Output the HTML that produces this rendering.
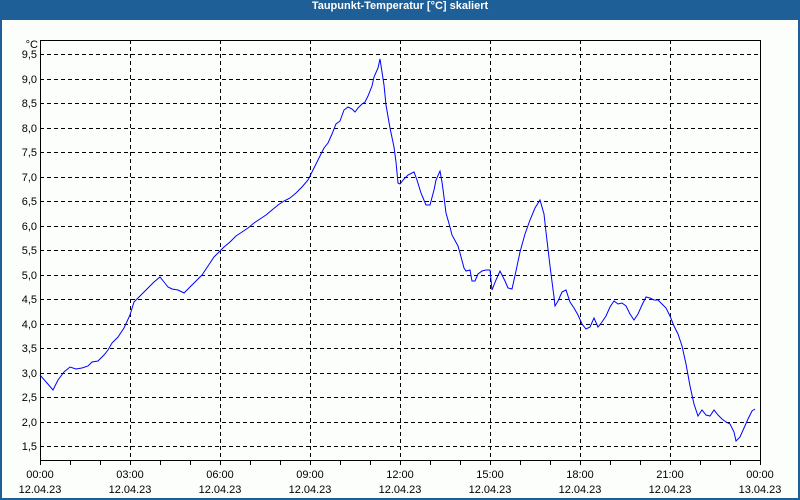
<!DOCTYPE html>
<html><head><meta charset="utf-8"><style>
html,body{margin:0;padding:0;width:800px;height:500px;overflow:hidden;background:#1d5f96}
#w{position:absolute;left:2px;top:20px;width:796px;height:478px;background:#fcfefc}
#t{position:absolute;left:0;top:0;width:800px;height:20px;line-height:18px;text-align:center;color:#fff;font:bold 11px "Liberation Sans",sans-serif}
svg{position:absolute;left:0;top:0}
text{font-family:"Liberation Sans",sans-serif;font-size:11px;fill:#000}
</style></head><body>
<div id="t">Taupunkt-Temperatur [°C] skaliert</div>
<div id="w"></div>
<svg width="800" height="500" viewBox="0 0 800 500">
<g stroke="#000" stroke-width="1" stroke-dasharray="4,3" shape-rendering="crispEdges">
<line x1="40" y1="54.5" x2="760" y2="54.5"/><line x1="40" y1="79.5" x2="760" y2="79.5"/><line x1="40" y1="103.5" x2="760" y2="103.5"/><line x1="40" y1="128.5" x2="760" y2="128.5"/><line x1="40" y1="152.5" x2="760" y2="152.5"/><line x1="40" y1="177.5" x2="760" y2="177.5"/><line x1="40" y1="201.5" x2="760" y2="201.5"/><line x1="40" y1="226.5" x2="760" y2="226.5"/><line x1="40" y1="250.5" x2="760" y2="250.5"/><line x1="40" y1="275.5" x2="760" y2="275.5"/><line x1="40" y1="299.5" x2="760" y2="299.5"/><line x1="40" y1="324.5" x2="760" y2="324.5"/><line x1="40" y1="348.5" x2="760" y2="348.5"/><line x1="40" y1="373.5" x2="760" y2="373.5"/><line x1="40" y1="397.5" x2="760" y2="397.5"/><line x1="40" y1="422.5" x2="760" y2="422.5"/><line x1="40" y1="446.5" x2="760" y2="446.5"/>
<line x1="130.5" y1="40" x2="130.5" y2="460"/><line x1="220.5" y1="40" x2="220.5" y2="460"/><line x1="310.5" y1="40" x2="310.5" y2="460"/><line x1="400.5" y1="40" x2="400.5" y2="460"/><line x1="490.5" y1="40" x2="490.5" y2="460"/><line x1="580.5" y1="40" x2="580.5" y2="460"/><line x1="670.5" y1="40" x2="670.5" y2="460"/>
</g>
<g stroke="#000" stroke-width="1" shape-rendering="crispEdges" fill="none">
<rect x="40.5" y="40.5" width="720" height="420"/>
<path d="M70.5 460v5M100.5 460v5M130.5 460v5M160.5 460v5M190.5 460v5M220.5 460v5M250.5 460v5M280.5 460v5M310.5 460v5M340.5 460v5M370.5 460v5M400.5 460v5M430.5 460v5M460.5 460v5M490.5 460v5M520.5 460v5M550.5 460v5M580.5 460v5M610.5 460v5M640.5 460v5M670.5 460v5M700.5 460v5M730.5 460v5M760.5 460v5M40.5 460v5"/>
</g>
<polyline fill="none" stroke="#0000ff" stroke-width="1" points="40,375 47,383 53,390 58,380 64,372 70,367 76,369 82,368 88,366 92,362 98,361 104,355 108,350 112,343 118,337 124,328 130,315 134,302 138,298 144,292 148,288 154,282 160,277 164,282 168,287 172,289 178,290 184,293 190,287 196,281 202,275 208,266 214,257 218,253 224,247 230,242 236,236 242,232 248,228 254,223 260,219 266,215 272,210 278,205 284,201 290,198 296,193 302,187 308,180 312,172 318,160 324,148 328,143 332,134 336,124 340,121 344,110 348,107 352,109 355,112 358,108 362,104 365,102 368,96 372,86 374,77 378,68 380,59 384,85 386,105 390,128 394,147 396,162 398,183 400,184 404,179 408,175 414,172 417,180 421,193 426,205 430,205 434,190 436,180 440,171 442,182 444,197 446,213 450,227 452,235 458,246 460,253 464,268 466,271 470,270 472,281 475,281 478,274 482,271 486,270 490,270 492,290 496,280 500,271 505,281 508,288 512,289 516,271 520,252 525,234 530,220 535,208 540,200 544,214 546,232 550,266 554,297 555,306 558,301 562,292 566,290 570,302 574,308 578,315 582,324 586,329 590,327 594,318 598,327 602,322 606,316 610,307 614,301 618,304 622,303 626,306 630,314 634,320 638,314 642,305 646,297 650,298 654,300 658,300 662,304 666,308 670,316 674,326 678,334 682,346 686,364 690,386 694,404 698,416 702,410 706,415 710,416 714,410 718,415 722,419 726,422 730,424 734,432 736,441 740,437 744,428 748,419 752,411 755,409"/>
<g text-anchor="end">
<text x="38" y="48">°C</text>
<text x="37" y="58">9,5</text><text x="37" y="83">9,0</text><text x="37" y="107">8,5</text><text x="37" y="132">8,0</text><text x="37" y="156">7,5</text><text x="37" y="181">7,0</text><text x="37" y="205">6,5</text><text x="37" y="230">6,0</text><text x="37" y="254">5,5</text><text x="37" y="279">5,0</text><text x="37" y="303">4,5</text><text x="37" y="328">4,0</text><text x="37" y="352">3,5</text><text x="37" y="377">3,0</text><text x="37" y="401">2,5</text><text x="37" y="426">2,0</text><text x="37" y="450">1,5</text>
</g>
<g text-anchor="middle">
<text x="40" y="478">00:00</text><text x="40" y="493">12.04.23</text>
<text x="130" y="478">03:00</text><text x="130" y="493">12.04.23</text>
<text x="220" y="478">06:00</text><text x="220" y="493">12.04.23</text>
<text x="310" y="478">09:00</text><text x="310" y="493">12.04.23</text>
<text x="400" y="478">12:00</text><text x="400" y="493">12.04.23</text>
<text x="490" y="478">15:00</text><text x="490" y="493">12.04.23</text>
<text x="580" y="478">18:00</text><text x="580" y="493">12.04.23</text>
<text x="670" y="478">21:00</text><text x="670" y="493">12.04.23</text>
<text x="760" y="478">00:00</text><text x="760" y="493">13.04.23</text>
</g>
</svg>
</body></html>
